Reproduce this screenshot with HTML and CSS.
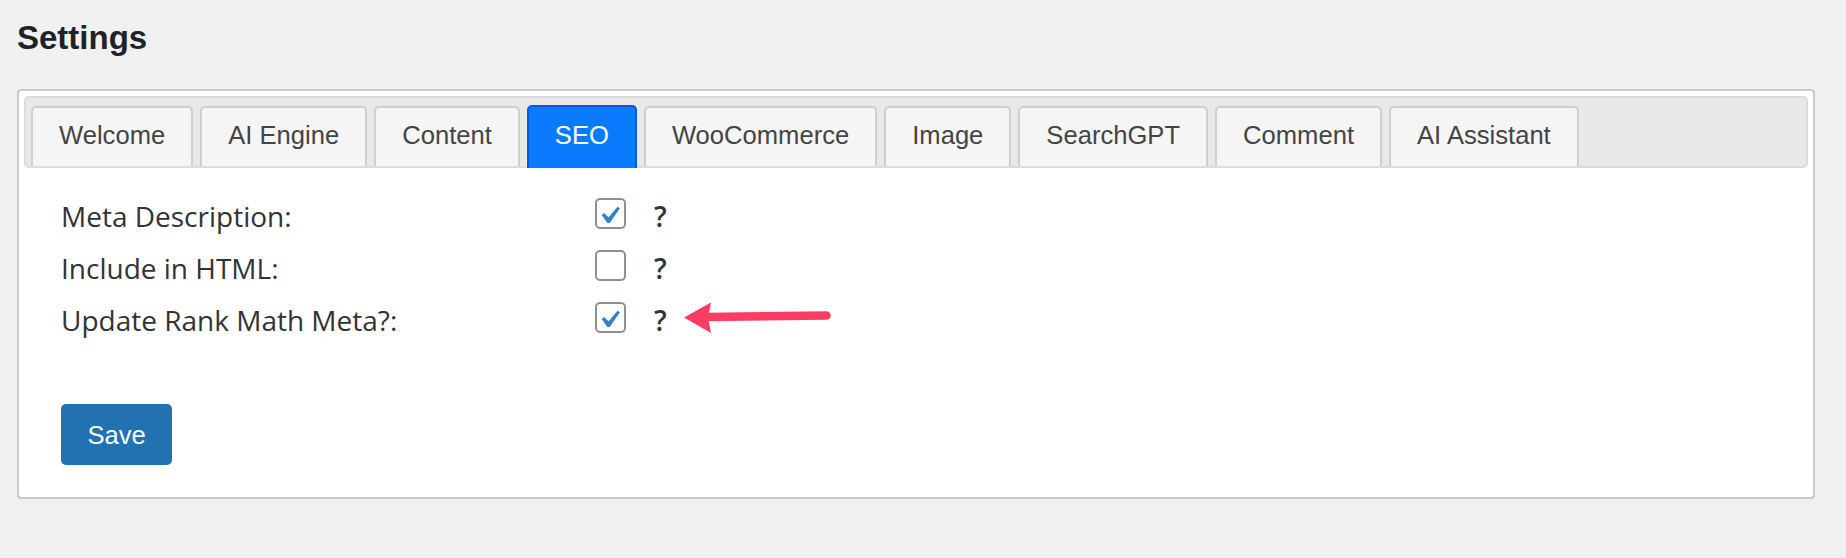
FILE: index.html
```html
<!DOCTYPE html>
<html>
<head>
<meta charset="utf-8">
<link rel="stylesheet" href="styles.css">
</head>
<body>
<div class="page">
  <h1 class="title">Settings</h1>
  <div class="card">
    <div class="tabbar">
      <div class="tab">Welcome</div>
      <div class="tab">AI Engine</div>
      <div class="tab">Content</div>
      <div class="tab active">SEO</div>
      <div class="tab">WooCommerce</div>
      <div class="tab">Image</div>
      <div class="tab">SearchGPT</div>
      <div class="tab">Comment</div>
      <div class="tab">AI Assistant</div>
    </div>
    <div class="panel">
      <div class="grid">
        <div class="label">Meta Description:</div>
        <div class="check"><svg viewBox="3.11 1.08 15.35 15.35" width="27" height="27"><path d="M14.83 4.89l1.34.94-5.81 8.38H9.02L5.78 9.67l1.34-1.25 2.57 2.4z" fill="#3582c4"/></svg></div>
        <div class="q">?</div>

        <div class="label">Include in HTML:</div>
        <div class="check"></div>
        <div class="q">?</div>

        <div class="label">Update Rank Math Meta?:</div>
        <div class="check"><svg viewBox="3.11 1.08 15.35 15.35" width="27" height="27"><path d="M14.83 4.89l1.34.94-5.81 8.38H9.02L5.78 9.67l1.34-1.25 2.57 2.4z" fill="#3582c4"/></svg></div>
        <div class="q">?
          <svg class="arrow" width="148" height="32" viewBox="0 0 148 32">
            <polygon points="0,15.5 27,0.5 24,15.5 27,31" fill="#fb3d64"/>
            <line x1="22" y1="15" x2="142.5" y2="13.5" stroke="#fb3d64" stroke-width="8.5" stroke-linecap="round"/>
          </svg>
        </div>
      </div>
      <div class="actions">
        <button class="save" type="button">Save</button>
      </div>
    </div>
  </div>
</div>
</body>
</html>
```
FILE: styles.css
```css
body {
  margin: 0;
  background: #f0f0f1;
}

.page {
  padding: 18px 31px 0 17px;
}

.title {
  margin: 0 0 31px;
  font: 700 33px/40px "Liberation Sans", Arial, sans-serif;
  color: #1d2327;
}

.card {
  background: #fff;
  border: 2px solid #c9c9c9;
  border-radius: 4px;
  padding: 5px;
}

.tabbar {
  display: flex;
  align-items: flex-start;
  gap: 7px;
  background: #e8e8e8;
  border: 2px solid #dcdcdc;
  border-radius: 5px;
  padding: 8px 5px 0;
}

.tab {
  box-sizing: border-box;
  height: 60px;
  padding: 12px 26px 0;
  border: 2px solid #cfcfcf;
  border-bottom: 0;
  border-radius: 5px 5px 0 0;
  background: #f5f5f5;
  font: 25.6px/30px "Liberation Sans", Arial, sans-serif;
  color: #444;
  white-space: nowrap;
}

.tab.active {
  height: 63px;
  margin-top: -1px;
  margin-bottom: -2px;
  padding-top: 13px;
  background: #0a7bff;
  border-color: #0b55e8;
  color: #fff;
}

.panel {
  padding: 22px 37px 27px;
}

.grid {
  display: grid;
  grid-template-columns: 534px 31px auto;
  grid-auto-rows: 52px;
}

.label {
  font: 28px/52px "Open Sans", "Noto Sans", sans-serif;
  color: #333;
  white-space: nowrap;
}

.check {
  box-sizing: border-box;
  width: 31px;
  height: 31px;
  margin-top: 7.5px;
  border: 2px solid #8c8f94;
  border-radius: 5px;
  background: #fff;
}

.check svg {
  display: block;
}

.q {
  position: relative;
  padding-left: 28px;
  font: 600 28px/52px "Open Sans", "Noto Sans", sans-serif;
  color: #333;
}

.arrow {
  position: absolute;
  left: 58px;
  top: 8px;
}

.actions {
  margin-top: 58px;
}

.save {
  display: block;
  height: 61px;
  padding: 0 26.5px;
  border: 0;
  border-radius: 5px;
  background: #2271b1;
  color: #fff;
  font: 25.6px/30px "Liberation Sans", Arial, sans-serif;
}
```
